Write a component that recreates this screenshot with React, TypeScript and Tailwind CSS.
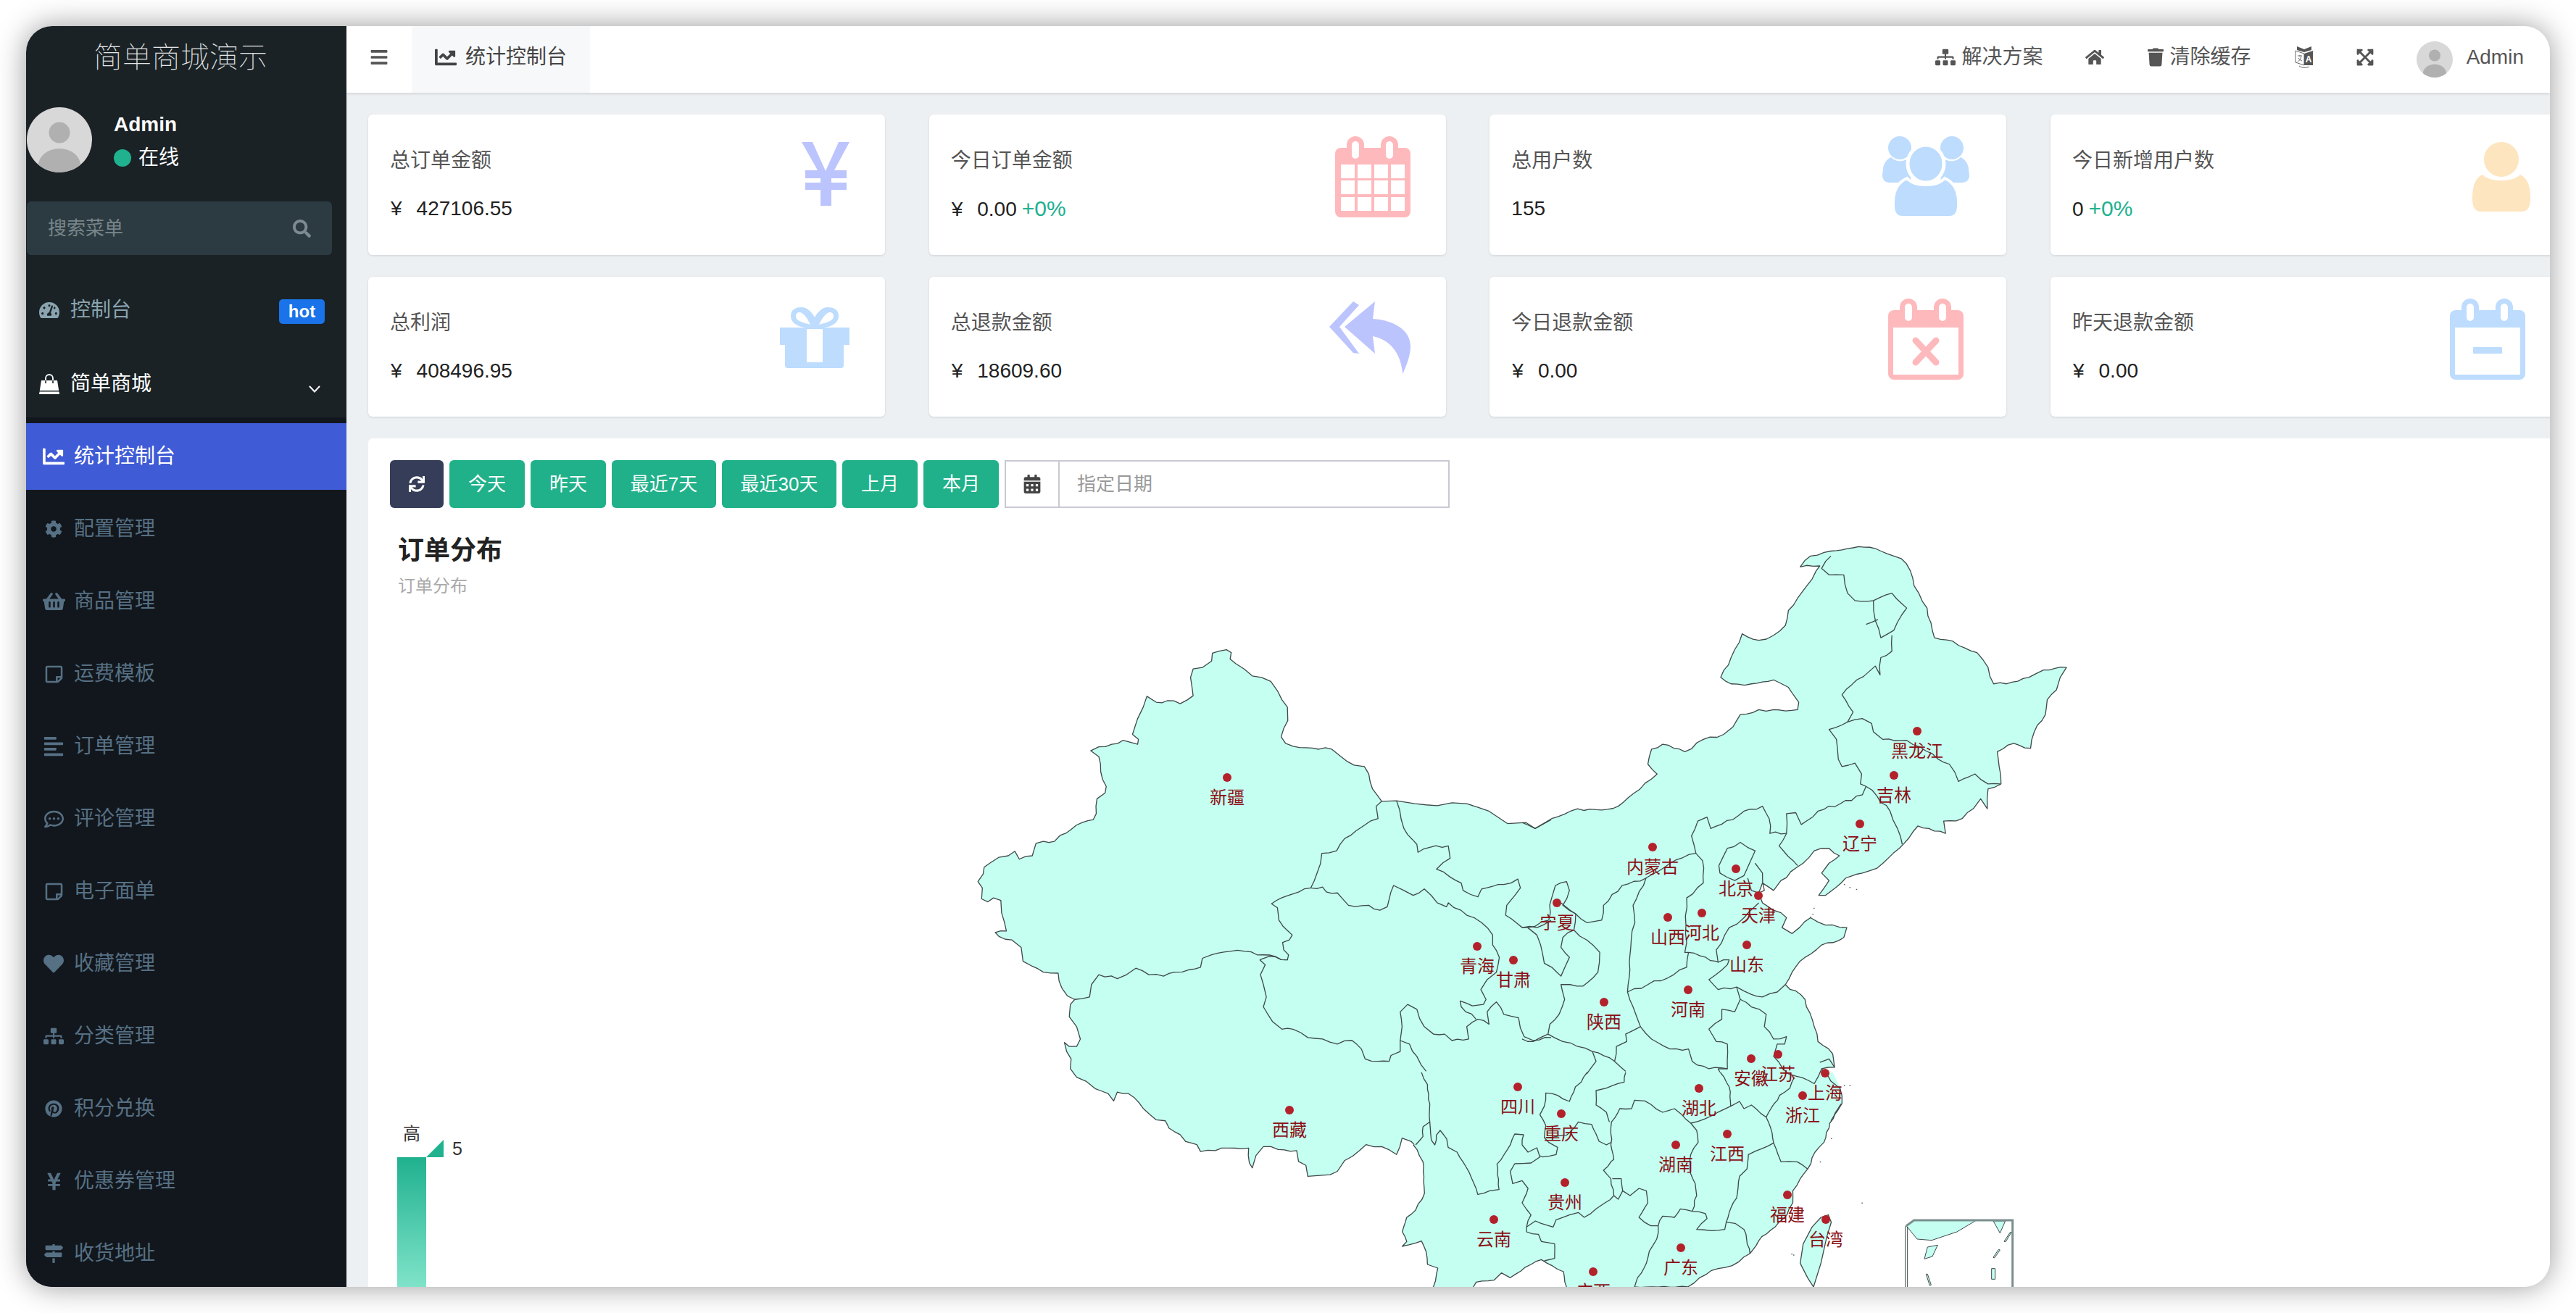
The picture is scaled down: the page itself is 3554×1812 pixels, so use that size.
import React from "react";
import {
  FaTachometerAlt, FaChartLine, FaCog, FaShoppingBasket, FaRegStickyNote, FaAlignLeft,
  FaRegCommentDots, FaHeart, FaSitemap, FaPinterest, FaYenSign, FaMapSigns, FaBars, FaSearch, FaHome,
  FaTrash, FaExpandArrowsAlt, FaSync, FaCalendarAlt,
} from "react-icons/fa";

const Avatar = ({ cls }: { cls: string }) => (
  <svg viewBox="0 0 90 90" className={cls}>
    <defs>
      <clipPath id="avc"><circle cx="45" cy="45" r="45" /></clipPath>
    </defs>
    <g clipPath="url(#avc)">
      <rect width="90" height="90" fill="#d8d8d8" />
      <circle cx="45" cy="35" r="14.5" fill="#b0b0b0" />
      <ellipse cx="45" cy="80" rx="29" ry="23" fill="#b0b0b0" />
    </g>
  </svg>
);

const Translate = () => (
  <svg viewBox="0 0 26 32" className="h-[32px] w-[26px]">
    <path d="M1 7 L13 11 V27 L1 23 Z" fill="#fff" stroke="#666" strokeWidth="1" />
    <path d="M13 11 L25 7 V27 L13 27 Z" fill="#555" />
    <path d="M3 1 L13 5 L23 1 V6 L13 9 L3 6 Z" fill="#555" />
    <text x="19" y="23" fontSize="12" fontWeight="700" fill="#fff" textAnchor="middle">A</text>
    <path d="M4 14 H10 M7 13 V15 M9 15 C8 19 6 21 4 22 M5 17 C6 19 8 20 10 21" stroke="#666" strokeWidth="1" fill="none" />
    <path d="M6 28 C10 31 16 31 20 29" stroke="#666" strokeWidth="1" fill="none" />
  </svg>
);

const Bag = () => (
  <svg viewBox="0 0 28 28" className="h-[28px] w-[28px]">
    <path d="M3 9 H25 L28 28 H0 Z" fill="#fff" />
    <path d="M9 13 V6 a5 5 0 0 1 10 0 V13" fill="none" stroke="#1a2226" strokeWidth="1.6" />
    <path d="M9 9 V6 a5 5 0 0 1 10 0 V9" fill="none" stroke="#fff" strokeWidth="1.8" />
    <rect x="0" y="23" width="28" height="1.5" fill="#1a2226" />
  </svg>
);

const IYen = () => (
  <svg viewBox="0 0 66 88" className="h-[88px] w-[66px]">
    <path d="M0 0 H15 L33 40 L51 0 H66 L45 39 H62 V50 H41 V56 H62 V66 H41 V88 H26 V66 H5 V56 H26 V50 H5 V39 H22 Z" fill="#bcc4fd" />
  </svg>
);

const CalBase = ({ c }: { c: string }) => (
  <>
    <rect x="0" y="16" width="104" height="96" rx="8" fill={c} />
    <rect x="16" y="0" width="24" height="36" rx="12" fill={c} />
    <rect x="63" y="0" width="24" height="36" rx="12" fill={c} />
    <rect x="23" y="7" width="10" height="24" rx="5" fill="#fff" />
    <rect x="70" y="7" width="10" height="24" rx="5" fill="#fff" />
  </>
);

const ICalGrid = () => (
  <svg viewBox="0 0 104 112" className="h-[112px] w-[104px]">
    <CalBase c="#feb9bd" />
    {[8, 31, 54, 77].map((x) =>
      [39, 61, 84].map((y) => <rect key={`${x}-${y}`} x={x} y={y} width="19" height="19" fill="#fff" />)
    )}
  </svg>
);

const ICalX = () => (
  <svg viewBox="0 0 104 112" className="h-[112px] w-[104px]">
    <CalBase c="#feb9bd" />
    <rect x="7" y="40" width="90" height="65" fill="#fff" />
    <path d="M38 58 L66 88 M66 58 L38 88" stroke="#feb9bd" strokeWidth="9" strokeLinecap="round" />
  </svg>
);

const ICalMinus = () => (
  <svg viewBox="0 0 104 112" className="h-[112px] w-[104px]">
    <CalBase c="#bddcfe" />
    <rect x="7" y="40" width="90" height="65" fill="#fff" />
    <rect x="32" y="67" width="40" height="9" rx="1" fill="#bddcfe" />
  </svg>
);

const IUsers = () => (
  <svg viewBox="0 0 120 112" className="h-[112px] w-[120px]">
    <g fill="#bddcfe">
      <ellipse cx="24" cy="16" rx="16" ry="16" />
      <ellipse cx="96" cy="16" rx="16" ry="16" />
      <path d="M1 46 C1 38 6 32 12 29 C18 36 30 36 36 30 L40 64 H10 C4 64 0 60 0 54 Z" />
      <path d="M119 46 C119 38 114 32 108 29 C102 36 90 36 84 30 L80 64 H110 C116 64 120 60 120 54 Z" />
      <path d="M15 96 C14 78 20 64 34 58 C44 70 76 70 86 58 C100 64 106 78 105 96 C105 106 100 112 92 112 H28 C20 112 15 106 15 96 Z" stroke="#fff" strokeWidth="4" />
      <ellipse cx="60" cy="38" rx="25" ry="26" stroke="#fff" strokeWidth="5" />
    </g>
  </svg>
);

const IUser = () => (
  <svg viewBox="0 0 80 96" className="h-[96px] w-[80px]">
    <path d="M0 78 C0 60 4 50 14 45 C24 56 56 56 66 45 C76 50 80 60 80 78 C80 90 76 96 68 96 H12 C4 96 0 90 0 78 Z" fill="#fde5bf" />
    <circle cx="40" cy="24" r="26" fill="#fde5bf" stroke="#fff" strokeWidth="4" />
  </svg>
);

const IGift = () => (
  <svg viewBox="0 0 96 84" className="h-[84px] w-[96px]">
    <g fill="#bddcfe">
      <path fillRule="evenodd" d="M48 28 C30 30 15 24 15 12 C15 3 22 0 30 0 C38 0 45 8 48 14 C51 8 58 0 66 0 C74 0 81 3 81 12 C81 24 66 30 48 28 Z M27 7 C23 7 22 10 22 13 C22 18 30 21 42 24 C38 15 32 7 27 7 Z M69 7 C64 7 58 15 54 24 C66 21 74 18 74 13 C74 10 73 7 69 7 Z" />
      <rect x="0" y="28" width="96" height="24" />
      <path d="M7 52 H88 V80 Q88 84 84 84 H11 Q7 84 7 80 Z" />
    </g>
    <rect x="37" y="30" width="22" height="46" fill="#fff" />
  </svg>
);

const IReply = () => (
  <svg viewBox="0 0 112 100" className="h-[100px] w-[112px]">
    <g fill="#bcc4fd">
      <path d="M33 0 L41 5 L14 35 L41 72 L33 71 L0 35 Z" />
      <path d="M63 0 L60 24 C90 26 112 40 112 62 C112 75 106 90 101 100 C100 80 90 54 60 48 L63 72 L21 35 Z" />
    </g>
  </svg>
);

const F = "#c4fff1";
const S = "#3f4848";

// roughen a traced border so it has the fine jagged look of geographic data
const jag = (s: string, step = 15, amp = 3) => {
  const p = s.trim().split(/\s+/).map((q) => q.split(",").map(Number));
  const out: string[] = [];
  p.forEach(([x, y], i) => {
    out.push(`${x},${y}`);
    if (i === p.length - 1) return;
    const [x2, y2] = p[i + 1];
    const dx = x2 - x;
    const dy = y2 - y;
    const len = Math.hypot(dx, dy);
    const n = Math.floor(len / step);
    for (let k = 1; k < n; k++) {
      const t = k / n;
      const h = Math.sin((x + k) * 12.9898 + (y + k) * 78.233) * 43758.5453;
      const r = (h - Math.floor(h) - 0.5) * 2 * amp;
      out.push(`${(x + dx * t - (dy / len) * r).toFixed(1)},${(y + dy * t + (dx / len) * r).toFixed(1)}`);
    }
  });
  return out.join(" ");
};

const aOuter = jag(
  "1110,535 1085,510 1075,480 1063,465 1035,462 1000,445 975,430 940,430 905,427 870,424 850,418 838,405 845,388 856,372 855,345 840,330 828,312 810,293 785,285 760,282 738,268 715,257 700,248 703,235 690,229 670,232 652,236 650,252 625,265 600,268 593,285 597,305 600,322 585,330 565,338 530,332 500,335 475,323 465,345 450,368 436,400 452,410 450,420 425,415 410,412 380,420 345,425 323,433 345,445 350,475 365,505 362,518 340,530 338,560 330,572 300,578 270,592 240,604 225,616 195,616 175,620 165,645 130,652 118,636 100,645 75,648 50,660 35,668 32,682 18,697 30,710 28,732 45,738 60,730 80,735 82,760 90,780 95,797 65,800 75,808 110,815 135,830 140,858 165,868 195,880 235,882 245,912 260,928 280,935 268,945 265,970 285,990 295,1015 285,1030 265,1030 252,1022 258,1040 270,1055 268,1075 285,1092 310,1100 335,1115 370,1125 385,1140 395,1122 425,1125 465,1155 500,1178 525,1180 535,1195 565,1208 580,1222 610,1228 620,1242 660,1240 695,1235 750,1235 752,1265 760,1275 770,1250 790,1232 830,1238 880,1240 885,1262 905,1270 910,1292 950,1290 990,1282 1010,1260 1050,1240 1068,1228 1110,1232 1150,1248 1165,1215 1190,1222 1198,1228"
);
const aTop = jag("1568,572 1525,590 1500,578 1450,580 1400,555 1340,540 1300,538 1260,544 1200,540 1150,534 1110,535", 30, 2);
const aLines = [
  "1110,535 1095,545 1100,570 1060,585 1040,595 1010,610 988,635 948,640 935,680 918,710 870,722 812,742 828,750 832,775 868,805 860,815 842,820 845,835 858,845 855,855 805,848 780,855",
  "855,855 790,845 740,838 700,838 650,845 625,852 620,870 590,875 550,880 520,888 480,885 445,872 420,885 395,893 345,885 325,905 320,930 280,935",
  "780,855 795,865 782,885 790,905 798,930 790,950 815,980 840,995 870,995 910,1012 950,1015 990,1025 1030,1018 1055,1035 1065,1055 1100,1060 1130,1060 1135,1048 1160,1040 1160,1018 1185,1025 1205,1050 1230,1080",
  "1160,1018 1165,990 1160,960 1180,945 1205,955 1225,990 1250,1005 1280,1005 1300,1018 1345,1015 1340,990 1370,975 1400,985 1395,960 1420,940 1440,965 1480,972 1495,1010 1520,1018 1568,1012",
  "918,710 950,708 960,718 990,720 1020,745 1075,745 1105,755 1125,748 1142,705 1170,715 1195,725 1225,712 1260,740 1285,748 1290,740 1340,765 1380,780 1410,805 1410,825 1428,850 1420,880 1395,895 1378,915 1392,935 1385,945 1355,948 1322,938 1325,950 1365,975",
  "1150,534 1170,590 1205,622 1208,638 1240,628 1290,625 1295,650 1258,672 1295,688 1325,700 1330,715 1370,728 1380,712 1440,703 1478,692 1485,710 1470,725 1448,745 1445,765 1490,790 1530,790 1568,775",
].map((l) => jag(l));

const bOuter = jag(
  "0,578 35,590 80,570 150,550 200,552 260,545 300,520 350,490 365,480 340,460 350,430 380,420 440,435 490,410 545,400 570,385 590,360 640,350 680,350 745,350 748,335 720,305 680,290 620,298 565,298 537,285 565,245 595,197 640,210 680,200 712,180 720,150 770,100 795,70 805,60 752,62 780,40 835,30 880,25 925,22 970,30 1025,45 1050,70 1060,100 1095,145 1115,205 1165,212 1230,235 1260,265 1275,298 1310,298 1370,285 1410,270 1472,265 1455,285 1445,310 1420,330 1415,360 1385,395 1375,428 1330,418 1285,435 1290,465 1295,500 1260,510 1258,550 1240,530 1220,550 1190,570 1140,575 1145,600 1100,590 1070,585 1045,610 1020,630 960,670 920,680 875,690 820,725 802,725 830,695 810,680 830,660 858,645 830,630 790,635 760,660 740,670 700,695 680,715 650,700 640,720 650,740 680,755 700,760 715,770 703,790 730,802 750,790 780,770 820,785 878,790 870,810 810,825 765,850 730,880 712,905 765,935 790,990 800,1020 840,1045 845,1072 810,1075 835,1100 860,1115 865,1145 835,1180"
);
const bLines = [
  "835,40 810,65 830,78 870,78 880,115 900,130 950,130 1000,115 1040,145 1005,190 970,205 955,170 950,130",
  "930,178 962,168",
  "1000,200 1000,232 970,245 968,280 955,262 905,290 865,320 895,355 880,375 920,368 945,378 950,395 975,410 1040,412 1075,425 1125,450 1155,460 1180,495 1225,480 1260,500 1293,500",
  "880,375 830,390 850,410 855,450 865,465 900,458 918,480 915,500 930,505 960,525 995,555 1015,590 1028,622",
  "930,505 920,522 860,540 800,555 755,582 740,558 715,560 715,600 695,625 745,665",
  "715,600 670,600 668,570 650,545 600,555 570,572 510,590 500,567 475,575 458,605 470,640 488,655 490,700 445,730 443,785 445,820 440,840 450,840 525,858 530,860 525,835 560,790 600,770 640,740",
  "470,640 400,660 335,690 270,705 220,745 215,775 175,780 130,755 105,740",
  "72,775 80,730 90,705 120,697 128,715 110,745 145,762 140,795 110,810 105,830 128,850 105,888 80,870 60,862 50,825 40,805 15,790 0,790",
  "72,775 15,790",
  "140,795 175,815 210,840 205,880 165,908 130,905 105,905 115,935 100,965 75,985 70,1005 30,1020 0,1015",
  "70,1005 110,1020 150,1030 190,1040 250,1060",
  "335,690 300,745 305,780 295,815 290,860 285,920 340,905 410,885 445,870 450,840",
  "532,665 555,630 590,618 630,635 615,660 600,685 575,695 535,680 532,665",
  "630,660 650,680 655,715 640,720 620,715 610,690",
  "530,860 560,855 555,865 505,895 530,915 580,910 620,925 650,930 690,920 712,905",
  "580,910 590,935 575,960 540,955 540,975 505,995 525,1020 555,1025 555,1075 505,1075 460,1060 450,1035 400,1035 350,1015 320,990 300,950 285,920",
  "320,990 280,1005 283,1020 255,1030 250,1060 280,1080",
  "190,1040 200,1060 175,1085",
  "555,1075 530,1075 535,1082",
  "590,935 620,950 660,965 655,990 680,1015 715,1010 710,1025 690,1025 680,1050 720,1085 740,1090",
  "740,1090 790,1105 810,1075",
  "805,1062 830,1055 845,1072",
].map((l) => jag(l));

const cOuter = jag("122,300 135,320 155,370 158,430 160,500 130,570 100,600 85,660 100,700 85,720 150,698 165,740 170,795 205,810 190,888", 20, 3);
const cOuter2 = jag("325,888 335,868 395,860 420,830 450,850 520,795 555,775 575,790 630,825 640,888", 20, 3);
const cCoast = jag("870,888 1050,888 1090,850 1130,820 1200,800 1260,750 1300,680 1345,640 1385,590 1405,540 1405,490 1430,440 1455,400 1480,330 1510,290 1530,210 1568,130", 20, 3);
const cLines = [
  "150,0 170,50 178,130 178,205 155,225 155,265 130,300",
  "178,205 183,280 195,300 200,260 213,240 235,275 240,310 270,330 300,390 320,440 340,505 380,490 412,485 405,380 440,320 465,255 495,258 490,300 510,330 540,312 550,350 520,375 465,378 450,410 458,460 490,448 510,480 490,540 520,590 505,640 505,660 545,670 555,700 600,710 600,770 565,780",
  "505,640 535,615 595,640 605,610 650,590 680,580 700,600 740,565 770,540 800,510 790,440 765,405 790,370 800,360 790,300 792,205 820,150 860,150 870,115 905,118 965,165 1005,150 1030,175 1060,210 1130,180 1195,140 1225,120 1240,150 1265,135 1315,185 1360,95 1395,65 1410,20",
  "800,510 815,525 830,490 825,440 795,440",
  "830,490 855,510 885,480 910,490 915,540 885,600 925,635 950,635 965,595 1005,600 1025,565 1065,575 1110,585 1115,605 1080,650 1130,655 1175,650 1180,620 1210,625 1240,650 1260,750",
  "950,635 945,690 920,740 910,790 880,850 870,888",
  "1060,210 1080,240 1085,290 1060,340 1060,420 1075,460 1080,510 1065,575",
  "1180,620 1190,580 1215,520 1225,430 1250,400 1255,340 1280,325 1340,292 1355,340 1365,370 1420,370 1455,400",
  "1315,185 1335,250 1340,292",
  "1160,0 1190,60 1195,140",
  "710,0 690,40 670,60 650,120 610,95 570,85 565,140 550,175 570,220 565,270 580,290 610,310 605,340 560,350 550,345",
  "570,270 640,260 680,205 725,215 740,255 750,285 775,300 790,290",
  "840,0 835,40 775,65 740,75 740,135 775,165 785,205",
].map((l) => jag(l, 20, 3));
const taiwan = "1500,600 1525,590 1535,620 1520,680 1500,790 1475,888 1455,850 1430,790 1440,710 1470,640";

const spots: [string, number, number][] = [
  ["新疆", 1693, 1073], ["西藏", 1779, 1532], ["青海", 2038, 1306], ["甘肃", 2088, 1325], ["四川", 2094, 1500],
  ["云南", 2061, 1683], ["黑龙江", 2645, 1009], ["吉林", 2613, 1070], ["辽宁", 2566, 1137], ["内蒙古", 2280, 1169],
  ["北京", 2395, 1199], ["天津", 2426, 1236], ["宁夏", 2148, 1246], ["河北", 2348, 1260], ["山西", 2301, 1266],
  ["山东", 2410, 1304], ["河南", 2329, 1366], ["陕西", 2213, 1383], ["江苏", 2453, 1455], ["安徽", 2416, 1461],
  ["上海", 2518, 1481], ["浙江", 2487, 1512], ["湖北", 2344, 1502], ["重庆", 2154, 1537], ["湖南", 2312, 1580],
  ["江西", 2383, 1565], ["贵州", 2159, 1632], ["福建", 2466, 1649], ["台湾", 2519, 1683], ["广东", 2319, 1722],
  ["广西", 2198, 1755],
];

const rev = (s: string) => s.split(" ").reverse().join(" ");

const Lines = ({ list }: { list: string[] }) => (
  <g fill="none" stroke={S} strokeWidth="1.3" strokeLinejoin="round">
    {list.map((p, i) => (
      <polyline key={i} points={p} vectorEffect="non-scaling-stroke" />
    ))}
  </g>
);

const ChinaMap = () => (
  <svg viewBox="508 605 3010 1171" className="absolute left-0 top-0 h-[1171px] w-[3010px]">
    <defs>
      <linearGradient id="lg" x1="0" y1="0" x2="0" y2="1">
        <stop offset="0" stopColor="#20b18f" />
        <stop offset="1" stopColor="#7fe3c9" />
      </linearGradient>
    </defs>
    <g transform="translate(1340,740) scale(0.5102,0.6837)">
      <polygon points={`${aOuter} 1568,1200 ${aTop}`} fill={F} />
    </g>
    <g transform="translate(2100,740) scale(0.5102,0.6837)">
      <polygon points={`${bOuter} 0,1180`} fill={F} />
    </g>
    <g transform="translate(1900,1480) scale(0.40816,0.33333)">
      <polygon points={`128,0 1540,0 1568,70 ${rev(cCoast)} 640,888 ${rev(cOuter2)} ${rev(cOuter)}`} fill={F} />
      <polygon points={taiwan} fill={F} stroke={S} strokeWidth="1.3" vectorEffect="non-scaling-stroke" />
      <Lines list={[cOuter, cOuter2, cCoast, ...cLines]} />
    </g>
    <g transform="translate(1340,740) scale(0.5102,0.6837)">
      <Lines list={[aOuter, aTop, ...aLines]} />
    </g>
    <g transform="translate(2100,740) scale(0.5102,0.6837)">
      <Lines list={[bOuter, ...bLines]} />
      <g fill="#4f5a5a">
        {[[870,702],[885,708],[903,712],[788,750],[785,762],[778,768],[870,1108],[885,1108],[918,1345],[728,1448],[733,1450],[805,1262],[835,1215]].map(([x, y]) => (
          <rect key={`${x}-${y}`} x={x} y={y} width="3" height="2" />
        ))}
      </g>
    </g>
    <g transform="translate(2600,1660) scale(0.33333)">
      <polygon points="90,95 122,72 380,72 300,120 195,155 135,150" fill={F} stroke={S} strokeWidth="3" />
      <polygon points="450,75 500,75 478,125" fill={F} stroke={S} strokeWidth="3" />
      <polyline points="90,95 122,72 530,72 530,350" fill="none" stroke="#7b8f8f" strokeWidth="9" />
      <line x1="86" y1="95" x2="86" y2="350" stroke={S} strokeWidth="3" />
      <line x1="95" y1="100" x2="95" y2="350" stroke={S} strokeWidth="3" />
      <polygon points="178,183 220,175 198,222 165,232" fill={F} stroke={S} strokeWidth="3" />
      <polygon points="495,160 520,122 525,122 502,160" fill={F} stroke={S} strokeWidth="3" />
      <polygon points="472,193 478,195 455,228 450,226" fill={F} stroke={S} strokeWidth="3" />
      <polygon points="443,272 458,272 458,316 443,316" fill={F} stroke={S} strokeWidth="3" />
      <polygon points="172,295 178,295 193,340 187,342" fill={F} stroke={S} strokeWidth="3" />
    </g>
    {spots.map(([n, x, y]) => (
      <g key={n}>
        <circle cx={x} cy={y} r="6" fill="#b3212b" />
        <text x={x} y={y + 36} fontSize="24" fill="#8b0f14" textAnchor="middle">{n}</text>
      </g>
    ))}
    <rect x="548" y="1597" width="40" height="179" fill="url(#lg)" />
    <polygon points="588,1597 612,1573 612,1597" fill="#20b18f" />
    <text x="568" y="1573" fontSize="24" fill="#333" textAnchor="middle">高</text>
    <text x="624" y="1594" fontSize="25" fill="#333">5</text>
  </svg>
);

const Card = ({ label, value, money, pct, icon, pos }: { label: string; value: string; money?: boolean; pct?: boolean; icon: React.ReactNode; pos: string }) => (
  <div className="flex justify-between rounded-[6px] bg-white pl-[30px] shadow-[0_1px_3px_rgba(0,0,0,0.12)]">
    <div>
      <div className="mt-[50px] text-[28px] leading-[28px] text-[#555]">{label}</div>
      <div className="mt-[38px] text-[28px] leading-[28px] text-[#222]">
        {money && <span className="ml-px mr-[20px]">¥</span>}
        {value}
        {pct && <span className="ml-[7px] text-[30px] text-[#20b18f]">+0%</span>}
      </div>
    </div>
    <div className={pos}>{icon}</div>
  </div>
);

const subItems: [React.ComponentType<{ className?: string }>, string, string][] = [
  [FaCog, "配置管理", "h-[24px] w-[24px]"],
  [FaShoppingBasket, "商品管理", "h-[30px] w-[31px]"],
  [FaRegStickyNote, "运费模板", "h-[27px] w-[27px]"],
  [FaAlignLeft, "订单管理", "h-[30px] w-[28px]"],
  [FaRegCommentDots, "评论管理", "h-[27px] w-[27px]"],
  [FaRegStickyNote, "电子面单", "h-[27px] w-[27px]"],
  [FaHeart, "收藏管理", "h-[28px] w-[28px]"],
  [FaSitemap, "分类管理", "h-[28px] w-[28px]"],
  [FaPinterest, "积分兑换", "h-[24px] w-[24px]"],
  [FaYenSign, "优惠券管理", "h-[27px] w-[27px]"],
  [FaMapSigns, "收货地址", "h-[26px] w-[26px]"],
];

const btns: [string, string][] = [
  ["今天", "w-[104px]"], ["昨天", "w-[104px]"], ["最近7天", "w-[144px]"], ["最近30天", "w-[158px]"], ["上月", "w-[104px]"], ["本月", "w-[104px]"],
];

export default function App() {
  return (
    <div className="h-[1812px] w-[3554px] overflow-hidden bg-white p-[36px] font-['Liberation_Sans','Noto_Sans_CJK_SC',sans-serif]">
      <div className="flex h-full w-full overflow-hidden rounded-[36px] shadow-[0_0_40px_rgba(0,0,0,0.4)]">
        <aside className="flex w-[442px] shrink-0 flex-col overflow-hidden bg-[#1a2226]">
          <div className="flex h-[92px] items-center pb-[6px] pl-[93px] text-[40px] font-thin text-[#e6e6e6]">简单商城演示</div>
          <div className="flex h-[150px] items-start pt-[20px]">
            <Avatar cls="ml-px h-[90px] w-[90px]" />
            <div className="ml-[30px]">
              <div className="mt-[10px] text-[28px] font-bold leading-[28px] text-white">Admin</div>
              <div className="mt-[18px] flex items-center text-[28px] leading-[28px] text-white">
                <span className="mr-[10px] h-[24px] w-[24px] rounded-full bg-[#20b18f]" />在线
              </div>
            </div>
          </div>
          <div className="mx-px flex h-[74px] w-[421px] items-center rounded-[6px] bg-[#2c3b41] pl-[29px] pr-[29px]">
            <input readOnly placeholder="搜索菜单" className="min-w-0 flex-1 bg-transparent text-[26px] outline-none placeholder:text-[#78858a]" />
            <FaSearch className="h-[25px] w-[25px] text-[#7d8a8f]" />
          </div>
          <div className="mt-[30px] flex h-[92px] items-center pl-[16px] pr-[30px] text-[28px] text-[#8aa4af]">
            <span className="flex w-[32px] justify-center"><FaTachometerAlt className="h-[28px] w-[28px]" /></span>
            <span className="ml-[13px]">控制台</span>
            <span className="ml-auto mt-[4px] flex h-[34px] w-[63px] items-center justify-center rounded-[5px] bg-[#1a73e8] text-[24px] font-bold text-white">hot</span>
          </div>
          <div className="mt-[10px] flex h-[92px] items-center pl-[16px] pr-[36px] text-[28px] text-white">
            <span className="flex w-[32px] justify-center"><Bag /></span>
            <span className="ml-[13px]">简单商城</span>
            <svg viewBox="0 0 16 10" className="ml-auto mt-[14px] h-[10px] w-[16px]">
              <polyline points="1,1 8,8.5 15,1" fill="none" stroke="#fff" strokeWidth="2" />
            </svg>
          </div>
          <div className="flex flex-1 flex-col gap-[8px] bg-[#12171d] pt-[8px]">
            <div className="flex h-[92px] shrink-0 items-center bg-[#3f5bd6] pl-[20px] text-[28px] text-white">
              <span className="flex w-[36px] justify-center"><FaChartLine className="h-[30px] w-[30px]" /></span>
              <span className="ml-[10px]">统计控制台</span>
            </div>
            {subItems.map(([I, t, sz]) => (
              <div key={t} className="flex h-[92px] shrink-0 items-center pl-[20px] text-[28px] text-[#567084]">
                <span className="flex w-[36px] justify-center"><I className={sz} /></span>
                <span className="ml-[10px]">{t}</span>
              </div>
            ))}
          </div>
        </aside>
        <main className="flex min-w-0 flex-1 flex-col overflow-hidden bg-[#ecf0f3]">
          <header className="relative z-10 flex h-[92px] shrink-0 items-center bg-white pr-[36px] text-[28px] text-[#555] shadow-[0_1px_4px_rgba(0,0,0,0.15)]">
            <div className="flex w-[90px] justify-center pb-[7px]"><FaBars className="h-[26px] w-[26px]" /></div>
            <div className="flex h-full items-center bg-[#f7f8f9] pb-[7px] pl-[32px] pr-[32px] text-[#444]">
              <FaChartLine className="h-[30px] w-[30px]" />
              <span className="ml-[12px]">统计控制台</span>
            </div>
            <div className="ml-auto flex items-center gap-[60px]">
              <div className="flex items-center gap-[9px] pb-[7px] pr-[-2px]"><FaSitemap className="h-[28px] w-[28px]" />解决方案</div>
              <div className="-ml-[2px] pb-[7px]"><FaHome className="h-[26px] w-[26px]" /></div>
              <div className="flex items-center gap-[9px] pb-[7px]"><FaTrash className="h-[26px] w-[22px]" />清除缓存</div>
              <div className="pb-[7px]"><Translate /></div>
              <div className="-ml-[2px] pb-[7px]"><FaExpandArrowsAlt className="h-[26px] w-[26px]" /></div>
              <div className="-ml-[2px] flex items-center gap-[19px] font-light">
                <Avatar cls="h-[50px] w-[50px]" /><span className="pb-[7px]">Admin</span>
              </div>
            </div>
          </header>
          <div className="flex min-h-0 flex-1 flex-col pl-[30px] pt-[30px]">
            <div className="grid grid-cols-[repeat(4,713px)] grid-rows-[194px_193px] gap-x-[60.67px] gap-y-[30px]">
              <Card label="总订单金额" value="427106.55" money icon={<IYen />} pos="mr-[49px] mt-[38px]" />
              <Card label="今日订单金额" value="0.00" money pct icon={<ICalGrid />} pos="mr-[49px] mt-[30px]" />
              <Card label="总用户数" value="155" icon={<IUsers />} pos="mr-[51px] mt-[30px]" />
              <Card label="今日新增用户数" value="0" pct icon={<IUser />} pos="mr-[51px] mt-[38px]" />
              <Card label="总利润" value="408496.95" money icon={<IGift />} pos="mr-[49px] mt-[42px]" />
              <Card label="总退款金额" value="18609.60" money icon={<IReply />} pos="mr-[49px] mt-[34px]" />
              <Card label="今日退款金额" value="0.00" money icon={<ICalX />} pos="mr-[59px] mt-[30px]" />
              <Card label="昨天退款金额" value="0.00" money icon={<ICalMinus />} pos="mr-[58px] mt-[30px]" />
            </div>
            <section className="relative mt-[30px] min-h-0 flex-1 overflow-hidden rounded-tl-[6px] bg-white pl-[30px] pt-[30px]">
              <ChinaMap />
              <div className="relative flex items-center gap-[8px]">
                <div className="flex h-[66px] w-[74px] items-center justify-center rounded-[6px] bg-[#353d59] text-white"><FaSync className="h-[22px] w-[22px]" /></div>
                {btns.map(([t, w]) => (
                  <div key={t} className={`flex h-[66px] items-center justify-center rounded-[6px] bg-[#20b18a] text-[26px] text-white ${w}`}>{t}</div>
                ))}
                <div className="flex h-[66px] w-[614px] items-center border-2 border-[#c9c9d4] bg-white">
                  <div className="flex h-full w-[74px] items-center justify-center border-r-2 border-[#c9c9d4]"><FaCalendarAlt className="h-[26px] w-[24px] text-[#444]" /></div>
                  <input readOnly placeholder="指定日期" className="min-w-0 flex-1 bg-transparent pl-[24px] text-[26px] outline-none placeholder:text-[#999]" />
                </div>
              </div>
              <div className="relative ml-[11px] mt-[37px] text-[36px] font-bold leading-[44px] text-[#222]">订单分布</div>
              <div className="relative ml-[11px] mt-[13px] text-[24px] leading-[28px] text-[#aaa]">订单分布</div>
            </section>
          </div>
        </main>
      </div>
    </div>
  );
}
